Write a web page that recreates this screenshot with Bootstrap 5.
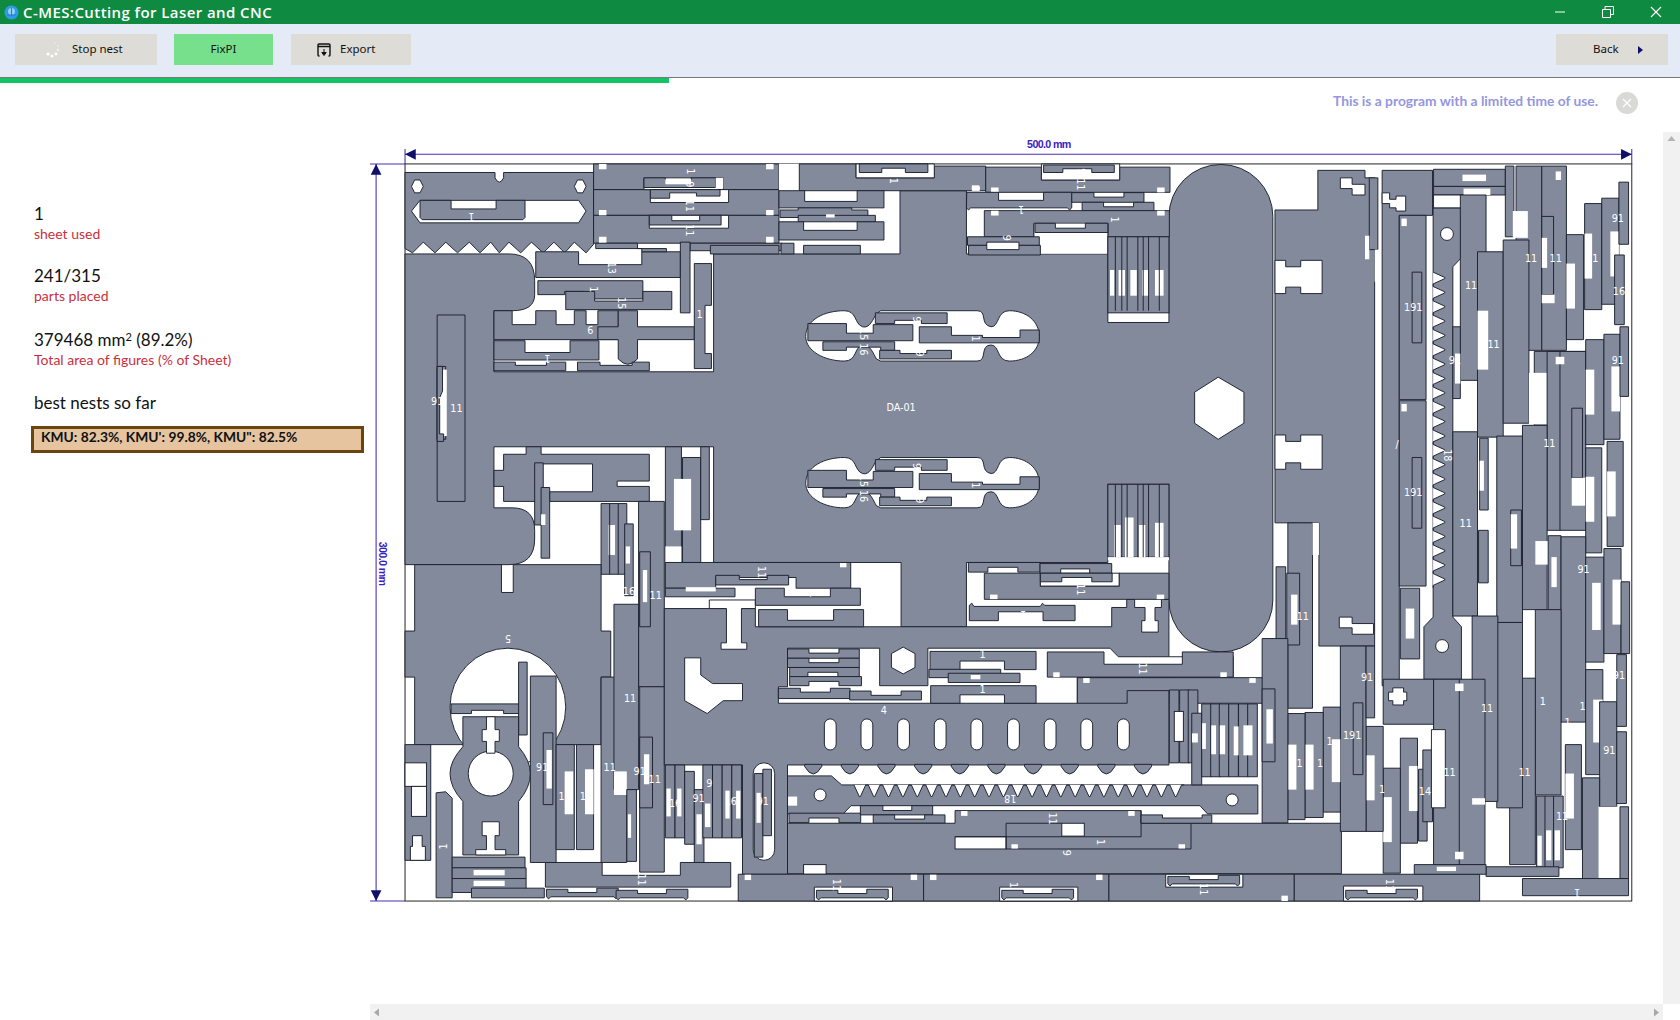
<!DOCTYPE html>
<html lang="en">
<head>
<meta charset="utf-8">
<title>C-MES:Cutting for Laser and CNC</title>
<link href="https://cdn.jsdelivr.net/npm/bootstrap@5.3.0/dist/css/bootstrap.min.css" rel="stylesheet">
<style>
html,body{height:100%;overflow:hidden;background:#fff}
.app-shell{height:1020px;width:1680px}
.title-strip{height:24px;background:#0f8a41;color:#fff;font:600 15px "Open Sans",sans-serif;letter-spacing:.42px}
.title-strip .win-btn{width:48px;height:24px}
.tool-strip{height:53px;background:#e4eaf6;padding:10px 12px 0 15px}
.tool-btn{height:31px;border:0;border-radius:0;background:#dedcd6;color:#111;font:11.5px "Noto Sans",sans-serif;padding:0 0 2px}
.tool-btn:hover{background:#dedcd6}
.tb-stop{width:142px;margin-right:17px;padding-left:29px}
.tb-stop svg{margin:2px 10px 0 0}
.tb-fix{width:99px;background:#77e08d;margin-right:18px}
.tb-fix:hover{background:#77e08d}
.tb-exp{width:120px;padding-left:26px}
.tb-exp svg{margin:2px 9px 0 0}
.tb-back{width:112px;padding-left:37px}
.tb-back svg{margin:2px 0 0 18px}
.run-bar{height:6px;border-radius:0;background:#fff;border-top:1px solid #777}
.run-bar .progress-bar{background:#12c464;margin-top:-1px;height:6px}
.notice-row{height:49px;padding:5px 42px 0 0}
.notice-txt{font:700 13.8px Lato,sans-serif;color:#9497e0;margin-right:18px;line-height:26px}
.notice-x{width:22px;height:22px;border-radius:50%;background:#d9d9d6;margin-top:4px}
.side-col{width:370px;padding:71px 0 0 34px;font-family:Lato,sans-serif}
.stat-val{font-size:17px;line-height:22px;color:#111}
.stat-val sup{font-size:11px}
.stat-cap{font-size:14px;line-height:18px;color:#c8303c;margin-bottom:22px}
.cap-mid{margin-bottom:24px}
.cap-far{margin-top:0;margin-bottom:23px}
.best-box{width:333px;height:27px;margin:12px 0 0 -3px;border:3px solid #6b4510;background:#e5c49f;font:700 13.8px/16px Lato,sans-serif;color:#111;padding:0 7px}
.stage-grid{display:grid;grid-template-columns:1293px 17px;grid-template-rows:872px 16px}
.sb-v,.sb-h{background:#f1f1f1}
.nest-svg{display:block}
.pt{fill:#838a9c;stroke:#1c2230;stroke-width:.9}
.wh{fill:#fff;stroke:#1c2230;stroke-width:.9}
.nw{fill:#fff;stroke:none}
.lb{fill:#fff;font:9px "DejaVu Sans",sans-serif;text-anchor:middle;stroke:none}
.dim{stroke:#4a2fb5;stroke-width:1;fill:none}
.dimt{fill:#3a22c0;font:700 10px "Liberation Sans",sans-serif;text-anchor:middle;letter-spacing:-.6px}
.ln{stroke:#1c2230;stroke-width:.9;fill:none}
</style>
</head>
<body>
<div class="app-shell d-flex flex-column">
  <div class="title-strip d-flex align-items-center">
    <svg class="ms-1 me-1" width="15" height="15" viewBox="0 0 15 15"><circle cx="7.500" cy="7.500" r="7" fill="#2f9be8"/><circle cx="7.500" cy="6.500" r="3.500" fill="#8fd0f5"/><path d="M3 10h9M7.500 3v8" stroke="#2a7fc4" fill="none"/></svg>
    <span class="flex-grow-1">C-MES:Cutting for Laser and CNC</span>
    <span class="win-btn d-flex align-items-center justify-content-center"><svg width="12" height="12"><path d="M1 6h10" stroke="#fff"/></svg></span>
    <span class="win-btn d-flex align-items-center justify-content-center"><svg width="12" height="12"><path d="M.5 3.500h8v8h-8zM3 3.500V.5h8.500v8H8.500" stroke="#fff" fill="none"/></svg></span>
    <span class="win-btn d-flex align-items-center justify-content-center"><svg width="12" height="12"><path d="M1 1l10 10M11 1L1 11" stroke="#fff" stroke-width="1.200"/></svg></span>
  </div>
  <div class="tool-strip d-flex">
    <button class="btn tool-btn tb-stop d-flex align-items-center"><svg width="18" height="18" viewBox="0 0 18 18"><g fill="#fff"><circle cx="14" cy="9" r="1.300" fill="#f1f0ec"/><circle cx="12" cy="13" r="1.400"/><circle cx="8" cy="15" r="1.500"/><circle cx="4" cy="13" r="1.600"/><circle cx="14" cy="5" r="1" fill="#eeece8"/><circle cx="11" cy="2" r=".9" fill="#e8e6e1"/></g></svg>Stop nest</button>
    <button class="btn tool-btn tb-fix">FixPI</button>
    <button class="btn tool-btn tb-exp d-flex align-items-center"><svg width="14" height="14" viewBox="0 0 14 14"><path d="M2.500 13H2a1 1 0 0 1-1-1V2a1 1 0 0 1 1-1h10a1 1 0 0 1 1 1v10a1 1 0 0 1-1 1h-.5M1 3.500h12" stroke="#111" stroke-width="1.400" fill="none"/><path d="M7 6v5M4.800 9.500L7 12.500l2.200-3z" stroke="#111" fill="#111"/></svg>Export</button>
    <span class="flex-grow-1"></span>
    <button class="btn tool-btn tb-back d-flex align-items-center"><span>Back</span><svg width="8" height="10" viewBox="0 0 8 10"><path d="M1 1l5 4-5 4z" fill="#10106a"/></svg></button>
  </div>
  <div class="progress run-bar"><div class="progress-bar" style="width:39.8%"></div></div>
  <div class="notice-row d-flex justify-content-end">
    <span class="notice-txt">This is a program with a limited time of use.</span>
    <span class="notice-x d-flex align-items-center justify-content-center"><svg width="10" height="10"><path d="M1 1l8 8M9 1L1 9" stroke="#fff" stroke-width="1.200"/></svg></span>
  </div>
  <div class="d-flex flex-grow-1">
    <div class="side-col">
      <div class="stat-val">1</div><div class="stat-cap">sheet used</div>
      <div class="stat-val">241/315</div><div class="stat-cap cap-mid">parts placed</div>
      <div class="stat-val">379468 mm<sup>2</sup> (89.2%)</div><div class="stat-cap cap-far">Total area of figures (% of Sheet)</div>
      <div class="stat-val">best nests so far</div>
      <div class="best-box">KMU: 82.3%, KMU': 99.8%, KMU": 82.5%</div>
    </div>
    <div class="stage-grid">
<svg class="nest-svg" width="1293" height="872" viewBox="345.33 123.2 1206.8 813.9">
<defs>
<path id="p9" d="M0,2H20V5H47V1H67V9l-2,2-2,-2H4l-2,2-2,-2Z"/>
<path id="sc" d="M-8,0v2q8,14 16,0v-2z"/>
<path id="vs" d="M0,0H9V68H0Z"/>
</defs>
<!-- dimensions -->
<path class="dim" d="M378,144H1523M378,139V153M1523,139V153M351,153V841M345,153H378M345,841H378"/>
<path d="M378,144l10,-5v10zM1523,144l-10,-5v10zM351,153l-5,10h10zM351,841l-5,-10h10z" fill="#10106a"/>
<text class="dimt" x="979" y="138">500.0 mm</text>
<text class="dimt" transform="translate(354,526) rotate(90)">300.0 mm</text>
<rect x="378" y="153" width="1145" height="688" fill="#fff" stroke="#333" stroke-width="1"/>

<!-- big part DA-01 -->
<path class="pt" d="M378,237H475Q499,237 499,262V275Q499,290 478,290H461V347H666V237H840V178H902V237H1034V301H1091V202A48,48 0 0 1 1188,202V560A48,48 0 0 1 1091,560V452H1034V525H902V585H841V525H666V417H461V474H478Q499,474 499,495V503Q499,527 475,527H378Z"/>
<path class="pt" d="M408,294H434V468H408Z"/>
<path class="pt" d="M408,342H416V410H408Z"/><rect class="nw" x="411" y="345" width="6" height="62"/>
<path class="pt" d="M408,342H413V365L410,372V405H414V412H408Z"/>
<path class="wh" d="M1137,352L1161,366V395L1137,410L1115,395V366Z"/>
<g id="slot"><path class="wh" d="M752,314C752,298 770,290 788,290C800,290 797,302 805,305C812,307 815,297 818,293L822,290H912C922,290 914,303 925,305C933,305 930,290 942,290C958,290 970,300 970,314C970,328 958,337 942,337C930,337 933,322 925,322C914,322 922,337 912,337H822L818,335C815,330 812,321 805,322C797,324 800,337 788,337C770,337 752,328 752,314Z"/>
<path class="pt" d="M754,302H790V311H815V303H852V318H754Z"/>
<path class="pt" d="M768,319H835V327H822V324H790V327H768Z"/>
<path class="pt" d="M817,292H884V302H860V299H835V302H817Z"/>
<path class="pt" d="M821,327H840V330H865V327H888V335H821Z"/>
<path class="pt" d="M858,305H888V313H917V315H952V308H970V320H858Z"/>
<text class="lb" transform="translate(803,312) rotate(90)">15</text><text class="lb" transform="translate(803,326) rotate(90)">16</text><text class="lb" transform="translate(907,316) rotate(90)">1</text><text class="lb" transform="translate(852,298) rotate(90)">9</text><text class="lb" transform="translate(855,330) rotate(90)">9</text></g>
<use href="#slot" transform="translate(0,137)"/>
<text class="lb" x="841" y="384">DA-01</text>
<text class="lb" transform="translate(1239,372) rotate(90)">3</text>

<!-- top-left part -->
<path class="pt" d="M378,161H462V166Q466,174 470,166V161H554V228L547,236L536,226L527,236L517,226L507,236L496,226L486,236L475,226L466,236L458,226L448,236L438,226L427,236L416,226L406,236L395,226L385,236L378,232Z"/>
<path class="wh" d="M384,174l3,-6 5,0 3,6-3,6-5,0z"/><path class="wh" d="M536,174l3,-6 5,0 3,6-3,6-5,0z"/>
<path class="wh" d="M384,197L392,187H540L547,197L540,208H392Z"/>
<path class="pt" d="M392,187H421V195H463V187H490V203L488,205H394L392,203Z"/>
<text class="lb" transform="translate(440,199) rotate(180)">1</text>

<!-- strips top -->
<path class="pt" d="M554,153H727V177H554Z"/><path class="pt" d="M554,177H727V201H554Z"/><path class="pt" d="M554,201H727V227H554Z"/>
<g class="nw"><rect x="559" y="153" width="7" height="5"/><rect x="715" y="153" width="7" height="5"/><rect x="559" y="196" width="7" height="5"/><rect x="715" y="196" width="7" height="5"/><rect x="559" y="221" width="7" height="6"/><rect x="715" y="221" width="7" height="6"/></g>
<path class="wh" d="M601,166H675V177H601Z"/><path class="pt" d="M601,166H621V168H645V166H668V175H601Z"/><rect class="nw" x="621" y="167" width="24" height="5"/><rect class="nw" x="668" y="166" width="7" height="10"/>
<path class="wh" d="M607,177H680V189H607Z"/><path class="pt" d="M607,177H672V183H650V180H625V185H607Z"/>
<path class="wh" d="M606,201H680V213H606Z"/><path class="pt" d="M606,201H627V206H653V201H673V210H606Z"/>
<rect class="nw" x="727" y="153" width="19" height="25"/>
<path class="pt" d="M746,153H799V166H872V155H920V178H746Z"/>
<path class="wh" d="M799,153H872V166H799Z"/>
<path class="pt" d="M802,153H866V161H845V157H823V161H802Z"/>
<rect class="nw" x="907" y="173" width="7" height="5"/>
<!-- p1 and 9s at 727-825 -->
<path class="pt" d="M727,178H751V188H800V178H825V194H727Z"/>
<path class="pt" d="M728,196H745V194H795V196H810V203H728Z"/>
<path class="pt" d="M745,201H817V207H745Z"/><rect class="nw" x="771" y="200" width="8" height="3"/>
<path class="pt" d="M727,207H750V215H800V207H825V224H727Z"/>
<path class="pt" d="M644,227H730V234H644Z"/>
<path class="pt" d="M663,229H727V237H663Z"/><path class="pt" d="M750,229H803V237H750Z"/><path class="pt" d="M729,227H741V237H729Z"/>
<!-- strips right of 902 -->
<path class="pt" d="M920,156H972V168H1045V156H1092V179.500H920Z"/>
<path class="wh" d="M972,153H1045V168H972Z"/>
<path class="pt" d="M974,154H1040V161H1019V157.500H992V161H974Z"/>
<rect class="nw" x="907.500" y="174" width="7" height="4"/><rect class="nw" x="925" y="175" width="7" height="4.500"/><rect class="nw" x="1080" y="175" width="7" height="4.500"/>
<path class="pt" d="M902.300,179.500H932V187H974V179.500H1000.300V194l-2,2-2,-2H906l-2,2-2,-2Z"/>
<path class="pt" d="M1000.300,179.800H1021V184H1049V179.800H1067.700V188.800H1000.300Z"/>
<path class="pt" d="M1010,188.800H1030V193H1058V188.800H1077V197H1010Z"/>
<path class="pt" d="M918.700,196.600H1091.400V221H1034V208.400H965V221H918.700Z"/>
<rect class="nw" x="925" y="196.700" width="7" height="4.500"/><rect class="nw" x="1080" y="196.700" width="7" height="4.500"/>
<rect class="nw" x="965" y="208.800" width="69" height="28"/>
<path class="ln" d="M965,208.400V221M1034,208.400V237"/>
<path class="pt" d="M966,208.400H985V213H1013V208.400H1034V217H966Z"/>
<path class="pt" d="M903,221H970V229H951V226H921V229H903Z"/>
<path class="pt" d="M904,229H921V233H951V229H971V238H904Z"/>
<rect class="pt" x="1034" y="221" width="57" height="71"/>
<g class="nw"><rect x="1036" y="252" width="4" height="24"/><rect x="1044" y="252" width="6" height="24"/><rect x="1055" y="252" width="6" height="24"/><rect x="1066" y="252" width="6" height="24"/><rect x="1078" y="252" width="8" height="24"/></g>
<path class="ln" d="M1041,221V290M1047,221V290M1052,221V290M1062,221V290M1067,221V290M1072,221V290M1082,221V290"/>
<rect class="pt" x="1034" y="452" width="57" height="68"/><rect class="nw" x="1034" y="520" width="57" height="3"/>
<g class="nw"><rect x="1040" y="490" width="6" height="30"/><rect x="1050" y="483" width="8" height="37"/><rect x="1063" y="490" width="6" height="30"/><rect x="1078" y="488" width="8" height="32"/></g>
<path class="ln" d="M1041,452V520M1047,452V520M1052,452V520M1062,452V520M1067,452V520M1072,452V520M1082,452V520"/>

<!-- upper hole content -->
<path class="pt" d="M500,235H540V247H599V235H635V259H500Z"/><path class="pt" d="M556,227H595V232H622V235H599V232H556Z"/>
<path class="pt" d="M502,262H600V279H545V272H527V275H502Z"/>
<path class="pt" d="M528,272H555V281H600V272H627V289H528Z"/>
<path class="pt" d="M461,290H478V303H500V290H519V303H536V290H547V303H558V290H577V317H461Z"/>
<path class="pt" d="M577,290H595V305H648V317H595V335Q586,345 577,335V317H558V305H577Z"/>
<path class="pt" d="M461,318H490V329H532V318H559V336H461Z"/>
<path class="pt" d="M461,338H481V341H510V338H528V346H461Z"/><path class="pt" d="M539,338H560V341H590V338H606V346H539Z"/>
<path class="pt" d="M635,226H644V292H635Z"/>
<path class="pt" d="M648,246H664V285H658V330H664V344H648Z"/>
<!-- lower hole content -->
<path class="pt" d="M491,417H505V424H606V449H576V454H606V468H513V459H553V433H506V468H470V454H461V439H470V424H491Z"/>
<path class="pt" d="M499,432H507V490H499Z"/><path class="pt" d="M505,455H513V521H505Z"/><rect class="nw" x="505" y="480" width="4" height="10"/>
<path class="pt" d="M621,417H636V525H621Z"/><path class="pt" d="M637,427H654V525H637Z"/><rect class="nw" x="629" y="447" width="16" height="48"/>
<path class="pt" d="M654,417H662V485H654Z"/>
<rect class="nw" x="621" y="510" width="15" height="15"/>
<path class="pt" d="M561,470H585V536H561Z"/><rect class="nw" x="568" y="490" width="6" height="28"/><path class="ln" d="M569,470V536M577,470V536"/>
<path class="pt" d="M583,489H591V556H583Z"/><rect class="nw" x="584" y="510" width="4" height="16"/>
<path class="pt" d="M596,468H620V641H596Z"/><path class="pt" d="M597,515H607V585H597Z"/><rect class="nw" x="600" y="532" width="4" height="30"/>

<!-- part 5 -->
<path class="pt" d="M387,527H468V553H479V527H561V589H570V632H561V695H387V632H378V589H387Z"/>
<ellipse class="wh" cx="474" cy="660" rx="54" ry="55"/>
<text class="lb" transform="translate(474,593) rotate(180)">5</text>
<path class="pt" d="M421,657H488V666H470V663H440V666H421Z"/>
<path class="pt" d="M484,618H492V686H484Z"/>
<!-- dumbbell -->
<path class="pt" d="M432,669H484V697Q495,710 495,722Q495,735 484,748V798H432V748Q420,735 420,722Q420,710 432,697Z"/>
<ellipse class="wh" cx="458" cy="722" rx="21" ry="21"/>
<path class="wh" d="M454,669H462V681H466V692H462V703H454V692H450V681H454Z"/>
<path class="wh" d="M450,767H466V780H462V793H472V798H444V793H454V780H450Z"/>
<path class="pt" d="M378,695H402V803H378Z"/>
<rect class="wh" x="378" y="712" width="20" height="22"/><rect class="wh" x="384" y="734" width="14" height="28"/>
<path class="wh" d="M385,780H394V790H397V803H383V790H385Z"/>
<path class="pt" d="M407,740L416,739L422,745V838H407Z"/><text class="lb" transform="translate(417,790) rotate(-90)">1</text>
<path class="pt" d="M422,800H490V810H422Z"/><path class="pt" d="M422,810H491V820H422Z"/><rect class="nw" x="442" y="812" width="29" height="5"/>
<path class="pt" d="M422,820H491V833H422Z"/><rect class="nw" x="442" y="822" width="29" height="5"/>
<path class="pt" d="M440,829H508V838H440Z"/>
<path class="pt" d="M509,805H562V817H635V805H682V828H509Z"/>
<use class="pt" href="#p9" transform="translate(510,828)"/><use class="pt" href="#p9" transform="translate(575,829)"/>
<path class="pt" d="M495,631H519V805H495Z"/>
<path class="pt" d="M507,684H516V751H507Z"/><rect class="nw" x="510" y="700" width="5" height="36"/>
<path class="pt" d="M519,695H536V793H519Z"/><rect class="nw" x="527" y="720" width="8" height="40"/>
<path class="pt" d="M538,695H554V793H538Z"/><rect class="nw" x="546" y="718" width="8" height="42"/>
<path class="pt" d="M561,632H585V805H561Z"/><path class="pt" d="M573,564H596V737H573Z"/><rect class="nw" x="573" y="720" width="12" height="22"/>
<path class="pt" d="M597,641H620V814H597Z"/><path class="pt" d="M597,688H609V754H597Z"/><rect class="nw" x="601" y="704" width="5" height="28"/>
<path class="pt" d="M585,737H594V804H585Z"/><rect class="nw" x="586" y="760" width="3" height="22"/>

<!-- piece 4 -->
<path class="pt" d="M620,568H705V585H1037.600V567H1051.600V559.400H1059V567H1068.700V579.300H1065.600V590H1081V579.300H1078V567H1084V559.400H1091V714H735V816H693V714H620Z"/>
<path class="wh" d="M662,560H705V568H692V600H697V606H673V600H678V568H662Z"/>
<path class="wh" d="M639,614H654V630L665,638H693V654H675L660,666L639,654Z"/>
<path class="wh" d="M735,605H821V640H866V605H1036L1043.800,613H1151V632H1005.500V656.400H726.500V641H735Z"/>
<path class="wh" d="M843,604L854,610V623L843,629L832,623V610Z"/>
<path class="pt" d="M735,605.700H755V609.600H783V605.700H802V614.400H735Z"/>
<path class="pt" d="M735,614.400H755V618.500H783V614.400H802V623H735Z"/>
<path class="pt" d="M737,623H802V631.500H782V627.500H754V631.500H737Z"/>
<path class="pt" d="M737,631.500H804V640H783V636H755V640H737Z"/>
<path class="pt" d="M726.500,642.400H747V646H775V642.400H793.400V652H726.500Z"/>
<path class="pt" d="M793,645H813V649H841V645H860V653.300H793Z"/>
<path class="pt" d="M868,608H967V625H937.500V617H896V625H868Z"/>
<path class="pt" d="M867,624.700H934V632.500H867Z"/>
<path class="pt" d="M885,628.400H952V637H885Z"/><rect class="nw" x="906" y="630" width="9" height="4"/>
<path class="pt" d="M868.600,640H967V656.400H937.500V648.500H896V656.400H868.600Z"/>
<path class="pt" d="M977.500,608.500H1030.400V620H1103.500V608.500H1151V632H977.500Z"/>
<rect class="nw" x="983" y="627.500" width="6" height="4.500"/><rect class="nw" x="1139" y="627.500" width="6" height="4.500"/>
<path class="pt" d="M1005.500,632.500H1178.500V656.400H1092V644.600H1052V656.400H1005.500Z"/>
<rect class="nw" x="1011" y="632.900" width="6" height="4.500"/><rect class="nw" x="1166" y="632.900" width="6" height="4.500"/>
<g fill="#fff" stroke="#1c2230" stroke-width=".9"><rect x="769.400" y="671" width="11" height="29" rx="5.500"/><rect x="803.600" y="671" width="11" height="29" rx="5.500"/><rect x="837.800" y="671" width="11" height="29" rx="5.500"/><rect x="872" y="671" width="11" height="29" rx="5.500"/><rect x="906.200" y="671" width="11" height="29" rx="5.500"/><rect x="940.400" y="671" width="11" height="29" rx="5.500"/><rect x="974.600" y="671" width="11" height="29" rx="5.500"/><rect x="1008.800" y="671" width="11" height="29" rx="5.500"/><rect x="1043" y="671" width="11" height="29" rx="5.500"/></g>
<rect class="wh" x="703" y="712" width="20" height="91" rx="10"/>
<path class="pt" d="M704,722H712V800H704Z"/><rect class="nw" x="706" y="740" width="4" height="28"/><path class="pt" d="M712,718H720V780H712Z"/>
<text class="lb" x="825" y="666">4</text>
<!-- scallops / rack -->
<use class="pt" href="#sc" transform="translate(759,713.400)"/><use class="pt" href="#sc" transform="translate(793.200,713.400)"/><use class="pt" href="#sc" transform="translate(827.400,713.400)"/><use class="pt" href="#sc" transform="translate(861.600,713.400)"/><use class="pt" href="#sc" transform="translate(895.800,713.400)"/><use class="pt" href="#sc" transform="translate(930,713.400)"/><use class="pt" href="#sc" transform="translate(964.200,713.400)"/><use class="pt" href="#sc" transform="translate(998.400,713.400)"/><use class="pt" href="#sc" transform="translate(1032.600,713.400)"/><use class="pt" href="#sc" transform="translate(1066.800,713.400)"/>
<path class="pt" d="M735,724.200H776L785.600,732.600H1174V759.700H1127L1120,752H794.300L787,759.700H735Z"/>
<path class="wh" d="M797,732.600l5,10.900h1l5,-10.900h2.400l5,10.900h1l5,-10.900h2.400l5,10.900h1l5,-10.900h2.400l5,10.900h1l5,-10.900h2.400l5,10.900h1l5,-10.900h2.400l5,10.900h1l5,-10.900h2.400l5,10.900h1l5,-10.900h2.400l5,10.900h1l5,-10.900h2.400l5,10.900h1l5,-10.900h2.400l5,10.900h1l5,-10.900h2.400l5,10.900h1l5,-10.900h2.400l5,10.900h1l5,-10.900h2.400l5,10.900h1l5,-10.900h2.400l5,10.900h1l5,-10.900h2.400l5,10.900h1l5,-10.900h2.400l5,10.900h1l5,-10.900h2.400l5,10.900h1l5,-10.900h2.400l5,10.900h1l5,-10.900h2.400l5,10.900h1l5,-10.900h2.400l5,10.900h1l5,-10.900h2.400l5,10.900h1l5,-10.900h2.400l5,10.900h1l5,-10.900h2.400l5,10.900h1l5,-10.900h2.400"/>
<rect class="nw" x="735.500" y="743.500" width="8.500" height="8.500"/>
<circle class="wh" cx="765.400" cy="742" r="5.600"/><circle class="wh" cx="1150" cy="746.600" r="5.600"/>
<path class="pt" d="M736.400,759H803.300V767.800H783V763.500H755V767.800H736.400Z"/>
<path class="pt" d="M803,752H824V756.500H851V752H870.500V760.600H803Z"/>
<path class="pt" d="M815,760.600H835V764.500H863V760.600H882V768.400H815Z"/>
<path class="pt" d="M735,768.400H891.400V756.600H1065V768.400H1252V815.500H735Z"/>
<rect class="wh" x="750" y="807" width="21" height="9"/>
<rect class="wh" x="891.400" y="781" width="47.600" height="11.400"/>
<path class="ln" d="M891.400,781H1065V756.600M939,792.400H1111.600V768.400"/>
<path class="ln" d="M939,768.400V792.400M939,768.400H991"/>
<rect class="wh" x="991" y="768.400" width="21" height="12"/>
<g class="nw"><rect x="897" y="757" width="6" height="4.500"/><rect x="1053" y="757" width="6" height="4.500"/><rect x="944" y="788" width="6" height="4"/><rect x="1100" y="788" width="6" height="4"/></g>
<path class="pt" d="M1065,760.600H1085V763.500H1122V760.600H1131V768.400H1065Z"/>
<text class="lb" transform="translate(992,796) rotate(90)">9</text>
<path class="pt" d="M689,816H862V841H689Z"/><path class="pt" d="M862,816H1035V841H862Z"/><path class="pt" d="M1035,816H1208V841H1035Z"/><path class="pt" d="M1208,816H1381V841H1208Z"/>
<path class="wh" d="M760,828H833V841H760Z"/><path class="wh" d="M933,828H1006V841H933Z"/><path class="wh" d="M1088,816H1160V828H1088Z"/><path class="wh" d="M1254,827H1328V841H1254Z"/>
<use class="pt" href="#p9" transform="translate(762,829)"/><use class="pt" href="#p9" transform="translate(935,829)"/><use class="pt" href="#p9" transform="translate(1090,816)"/><use class="pt" href="#p9" transform="translate(1256,829)"/>
<g class="nw"><rect x="695" y="816.400" width="6" height="5"/><rect x="850" y="816.400" width="6" height="5"/><rect x="868" y="816.400" width="6" height="5"/><rect x="1023" y="816.400" width="6" height="5"/><rect x="1196" y="836" width="6" height="5"/></g>
<!-- small-part blocks -->
<g><use class="pt" href="#vs" transform="translate(621,714)"/><use class="pt" href="#vs" transform="translate(630,714)"/><use class="pt" href="#vs" transform="translate(639,720)"/><use class="pt" href="#vs" transform="translate(648,737)"/><use class="pt" href="#vs" transform="translate(656,714)"/><use class="pt" href="#vs" transform="translate(665,714)"/><use class="pt" href="#vs" transform="translate(674,714)"/><use class="pt" href="#vs" transform="translate(683,714)"/></g>
<g class="nw"><rect x="622" y="736" width="4" height="26"/><rect x="632" y="736" width="4" height="26"/><rect x="650" y="760" width="5" height="28"/><rect x="677" y="738" width="4" height="26"/><rect x="687" y="738" width="4" height="26"/><rect x="658" y="750" width="5" height="22"/></g>
<use class="pt" href="#vs" transform="translate(1091.400,644)"/><use class="pt" href="#vs" transform="translate(1101,644)"/><use class="pt" href="#vs" transform="translate(1109,644)"/>
<rect class="wh" x="1096" y="664" width="8.500" height="28"/>
<path class="pt" d="M1112.300,665.700H1121.600V732.600H1112.300Z"/><rect class="nw" x="1112.500" y="684.500" width="5.500" height="8.500"/>
<use class="pt" href="#vs" transform="translate(1121.600,657)"/><use class="pt" href="#vs" transform="translate(1130,657)"/><use class="pt" href="#vs" transform="translate(1138,657)"/><use class="pt" href="#vs" transform="translate(1146.800,657)"/><use class="pt" href="#vs" transform="translate(1156,657)"/><use class="pt" href="#vs" transform="translate(1164.500,657)"/>
<g class="nw"><rect x="1122" y="675" width="3.500" height="24"/><rect x="1130.500" y="677" width="4.500" height="27"/><rect x="1138.500" y="677" width="5" height="27"/><rect x="1151.500" y="678" width="4.500" height="27"/><rect x="1160.500" y="677" width="8.500" height="28"/></g>
<!-- mid strips under DA-01 -->
<path class="pt" d="M621,525H794V549H743V539H668V549H621Z"/><rect class="nw" x="784" y="525.500" width="6" height="4"/>
<path class="pt" d="M668,537H690V541H716V537H736V546H668Z"/>
<path class="pt" d="M621,549H686V557H621Z"/><rect class="nw" x="640" y="548" width="28" height="4"/>
<path class="pt" d="M705,549H732V557H775V549H803V565H705Z"/><path class="pt" d="M708,569H735V579H778V569H806V585H708Z"/>
<!-- 902-1091 below DA-01 -->
<path class="pt" d="M903.800,525H970.700V534H950V529.500H922V534H903.800Z"/>
<path class="pt" d="M918.700,535H971V547H1044.500V535H1091V559.400H918.700Z"/>
<rect class="nw" x="924" y="555" width="7" height="4.200"/><rect class="nw" x="1079.600" y="555" width="7" height="4.200"/>
<rect class="wh" x="971" y="535" width="73.500" height="12"/>
<path class="pt" d="M970.700,526H1037.600V535H1017V531H990V535H970.700Z"/>
<path class="pt" d="M971,535H1038V543H1019V539H991V543H971Z"/>
<path class="pt" d="M904.700,565L907,563L909,566H971L973,563L975,565H1003.400V579.300H973.500V571H931.800V579.300H904.700Z"/>

<!-- part 3 & right column -->
<path class="pt" d="M1190,196H1230V159H1274V166H1283V603H1231V488H1190Z"/>
<path class="wh" d="M1251,166H1262V172H1274V182H1262V176H1251Z"/>
<path class="wh" d="M1190,243H1200V249H1214V243H1234V274H1214V268H1200V274H1190Z"/>
<path class="wh" d="M1190,406H1200V412H1214V406H1234V438H1214V432H1200V438H1190Z"/>
<path class="wh" d="M1250,576H1262V582H1282V592H1262V586H1250Z"/>
<path class="pt" d="M1278,166H1286V233H1278Z"/><rect class="nw" x="1274" y="220" width="4" height="22"/><rect class="nw" x="1283" y="233" width="7" height="30"/>
<path class="pt" d="M1202,488H1225V661H1202Z"/><rect class="nw" x="1225" y="488" width="6" height="30"/>
<path class="pt" d="M1191,529H1200V596H1191Z"/><path class="pt" d="M1201,535H1213V602H1201Z"/><rect class="nw" x="1205" y="555" width="6" height="28"/>
<path class="pt" d="M1290,159H1337V201H1306V640H1290Z"/>
<path class="wh" d="M1290,180H1297V186H1303V183H1312V197H1303V194H1297V190H1290Z"/>
<path class="pt" d="M1306,201H1331V373H1306Z"/><rect class="nw" x="1308" y="204" width="5" height="7"/><path class="pt" d="M1306,374H1331V547H1306Z"/><rect class="nw" x="1308" y="377" width="5" height="7"/>
<path class="pt" d="M1318,254H1327V320H1318Z"/><path class="pt" d="M1318,427H1327V493H1318Z"/>
<path class="pt" d="M1337.600,194H1363.500V241L1356,249V576L1364,585V634H1329V585L1337.600,576Z"/>
<circle class="wh" cx="1350.500" cy="218.400" r="6"/><circle class="wh" cx="1346" cy="603" r="6"/>
<path class="wh" d="M1337.600,254l10.900,5v1l-10.900,5v2.400l10.900,5v1l-10.900,5v2.400l10.900,5v1l-10.900,5v2.400l10.900,5v1l-10.900,5v2.400l10.900,5v1l-10.900,5v2.400l10.900,5v1l-10.900,5v2.400l10.900,5v1l-10.900,5v2.400l10.900,5v1l-10.900,5v2.400l10.900,5v1l-10.900,5v2.400l10.900,5v1l-10.900,5v2.400l10.900,5v1l-10.900,5v2.400l10.900,5v1l-10.900,5v2.400l10.900,5v1l-10.900,5v2.400l10.900,5v1l-10.900,5v2.400l10.900,5v1l-10.900,5v2.400l10.900,5v1l-10.900,5v2.400l10.900,5v1l-10.900,5v2.400l10.900,5v1l-10.900,5v2.400l10.900,5v1l-10.900,5v2.400l10.900,5v1l-10.900,5v2.400l10.900,5v1l-10.900,5v2.400l10.900,5v1l-10.900,5v2.400"/>
<path class="pt" d="M1307,549H1325V615H1307Z"/><rect class="nw" x="1312" y="568" width="8" height="28"/>
<path class="pt" d="M1338,158H1405V174H1338Z"/><rect class="nw" x="1365" y="163" width="22" height="6"/><path class="pt" d="M1338,174H1405V182H1338Z"/><rect class="wh" x="1338" y="182" width="29" height="12"/><rect class="nw" x="1366" y="176" width="25" height="6"/>
<path class="pt" d="M1363,182H1387V355H1363Z"/>
<path class="pt" d="M1356,305H1363V372H1356Z"/><rect class="nw" x="1358" y="330" width="5" height="28"/>
<path class="pt" d="M1379,235H1403V408H1379Z"/><rect class="nw" x="1379" y="290" width="10" height="55"/>
<path class="pt" d="M1405,155H1413V221H1405Z"/>
<path class="pt" d="M1415,155H1439V327H1415Z"/><rect class="nw" x="1412" y="197" width="14" height="25"/>
<path class="pt" d="M1439,155H1462V327H1439Z"/><rect class="nw" x="1452" y="160" width="5" height="8"/>
<path class="pt" d="M1439,202H1450V275H1439Z"/><rect class="nw" x="1439" y="222" width="5" height="28"/><rect class="nw" x="1439" y="275" width="12" height="8"/>
<path class="pt" d="M1403,224H1427V395H1403Z"/>
<path class="pt" d="M1462,219H1478V317H1462Z"/><rect class="nw" x="1462" y="246" width="8" height="42"/>
<path class="pt" d="M1479,190H1495V289H1479Z"/><rect class="nw" x="1479" y="218" width="7" height="42"/>
<path class="pt" d="M1495,185H1511V284H1495Z"/><rect class="nw" x="1503" y="216" width="8" height="42"/>
<path class="pt" d="M1511,170H1520V228H1511Z"/><path class="pt" d="M1507,238H1516V303H1507Z"/>
<path class="pt" d="M1432,328H1480V397H1432Z"/>
<rect class="nw" x="1427" y="348" width="17" height="48"/>
<path class="pt" d="M1444,328H1480V495H1444Z"/><path class="ln" d="M1456,328V495"/>
<rect class="nw" x="1452" y="333" width="8" height="7"/><path class="pt" d="M1467,381H1477V446H1467Z"/><rect class="nw" x="1467" y="446" width="13" height="26"/>
<path class="pt" d="M1480,317H1497V415H1480Z"/><rect class="nw" x="1480" y="345" width="8" height="42"/>
<path class="pt" d="M1497,312H1512V410H1497Z"/><rect class="nw" x="1504" y="342" width="8" height="42"/>
<path class="pt" d="M1512,305H1520V370H1512Z"/>
<path class="pt" d="M1480,418H1495V516H1480Z"/><rect class="nw" x="1480" y="445" width="8" height="42"/>
<path class="pt" d="M1500,412H1515V510H1500Z"/><rect class="nw" x="1500" y="440" width="8" height="42"/>
<path class="pt" d="M1356,403H1379V575H1356Z"/>
<path class="pt" d="M1381,409H1389V476H1381Z"/><rect class="nw" x="1381" y="430" width="4" height="28"/>
<path class="pt" d="M1397,407H1421V581H1397Z"/><path class="pt" d="M1410,476H1420V528H1410Z"/>
<rect class="nw" x="1410" y="480" width="6" height="32"/>
<path class="pt" d="M1421,397H1444V569H1421Z"/><rect class="nw" x="1433" y="505" width="12" height="22"/>
<path class="pt" d="M1445,500H1457V569H1445Z"/><rect class="nw" x="1448" y="520" width="5" height="28"/>
<path class="pt" d="M1380,495H1389V544H1380Z"/>
<path class="pt" d="M1457,501H1480V674H1457Z"/>
<path class="pt" d="M1480,520H1497V618H1480Z"/><rect class="nw" x="1486" y="544" width="8" height="44"/>
<path class="pt" d="M1497,512H1513V610H1497Z"/><rect class="nw" x="1505" y="541" width="8" height="42"/>
<path class="pt" d="M1513,543H1521V610H1513Z"/>
<path class="pt" d="M1480,625H1496V723H1480Z"/><rect class="nw" x="1487" y="653" width="9" height="40"/>
<path class="pt" d="M1493,655H1509V753H1493Z"/>
<path class="pt" d="M1509,611H1518V678H1509Z"/><path class="pt" d="M1509,683H1518V750H1509Z"/>
<path class="pt" d="M1445,622H1455V689H1445Z"/><rect class="nw" x="1448" y="640" width="5" height="30"/>
<path class="pt" d="M1461,695H1476V793H1461Z"/><rect class="nw" x="1461" y="722" width="8" height="42"/>
<path class="pt" d="M1477,726H1493V824H1477Z"/>
<rect class="nw" x="1492" y="753" width="20" height="67"/>
<path class="pt" d="M1512,753H1520V820H1512Z"/>
<path class="pt" d="M1421,820H1520V836H1421Z"/>
<path class="pt" d="M1433,569H1457V742H1433Z"/>
<path class="pt" d="M1434,743H1459V810H1434Z"/><g class="nw"><rect x="1435" y="780" width="4" height="28"/><rect x="1443" y="775" width="5" height="28"/><rect x="1451" y="775" width="5" height="28"/></g><path class="ln" d="M1442,743V810M1450,743V810"/>
<path class="pt" d="M1409,633H1433V807H1409Z"/><rect class="nw" x="1409" y="681" width="12" height="26"/>
<path class="pt" d="M1397,581H1421V754H1397Z"/>
<path class="pt" d="M1374,575H1398V748H1374Z"/>
<path class="pt" d="M1338,634H1386V807H1338Z"/><path class="ln" d="M1362,634V807"/><rect class="nw" x="1358" y="638" width="8" height="7"/><rect class="nw" x="1358" y="795" width="8" height="7"/><rect class="nw" x="1374" y="745" width="12" height="6"/>
<path class="pt" d="M1387,809H1455V818H1387Z"/><path class="pt" d="M1320,807H1387V816H1320Z"/><rect class="nw" x="1341" y="809" width="18" height="4"/>
<path class="pt" d="M1291,634H1338V676H1291Z"/><path class="wh" d="M1300,642H1310V646H1313V654H1310V658H1300V654H1296V646H1300Z"/>
<path class="pt" d="M1307,689H1323V787H1307Z"/><rect class="nw" x="1315" y="715" width="8" height="42"/>
<path class="pt" d="M1291,717H1307V815H1291Z"/><rect class="nw" x="1291" y="744" width="8" height="42"/>
<path class="pt" d="M1275,678H1291V776H1275Z"/><rect class="nw" x="1275" y="705" width="8" height="42"/>
<path class="pt" d="M1251,603H1275V776H1251Z"/>
<path class="pt" d="M1235,660H1251V758H1235Z"/><rect class="nw" x="1243" y="690" width="8" height="40"/>
<path class="pt" d="M1218,665H1235V763H1218Z"/><rect class="nw" x="1218" y="695" width="8" height="42"/>
<path class="pt" d="M1202,666H1218V765H1202Z"/><rect class="nw" x="1202" y="695" width="8" height="42"/>
<path class="pt" d="M1178,596H1202V768H1178Z"/>
<path class="pt" d="M1178,643H1190V711H1178Z"/><rect class="nw" x="1182" y="662" width="6" height="32"/>
<path class="pt" d="M1263,656H1272V723H1263Z"/><path class="pt" d="M1275,603H1283V670H1275Z"/>
<path class="pt" d="M1324,718H1332V785H1324Z"/><path class="pt" d="M1328,700H1337V767H1328Z"/><path class="wh" d="M1336,681H1349V754H1336Z"/>

<!-- labels -->
<g>
<text class="lb" x="426" y="385">11</text><text class="lb" x="408" y="378">91</text>
<text class="lb" transform="translate(641,160) rotate(90)">1</text><text class="lb" transform="translate(640,172) rotate(90)">9</text><text class="lb" transform="translate(640,215) rotate(90)">11</text><text class="lb" transform="translate(640,192) rotate(90)">11</text>
<text class="lb" transform="translate(831,166) rotate(90)">11</text><text class="lb" transform="translate(1005,172) rotate(90)">11</text><text class="lb" transform="translate(1006,160) rotate(90)">9</text>
<text class="lb" transform="translate(953,192) rotate(180)">1</text><text class="lb" transform="translate(1037,205) rotate(90)">1</text><text class="lb" transform="translate(936,222) rotate(90)">9</text>
<text class="lb" transform="translate(567,250) rotate(90)">13</text><text class="lb" transform="translate(551,270) rotate(90)">1</text><text class="lb" transform="translate(577,283) rotate(90)">15</text><text class="lb" x="551" y="312">6</text><text class="lb" transform="translate(511,331) rotate(180)">1</text><text class="lb" x="653" y="297">1</text>
<text class="lb" x="612" y="559">11</text><text class="lb" x="587" y="555">16</text><text class="lb" x="611" y="731">11</text><text class="lb" x="588" y="655">11</text>
<text class="lb" x="527" y="747">11</text><text class="lb" x="544" y="747">1</text><text class="lb" x="506" y="720">91</text><text class="lb" x="569" y="720">11</text><text class="lb" x="597" y="723">91</text>
<text class="lb" x="630" y="753">16</text><text class="lb" x="652" y="749">91</text><text class="lb" x="682" y="751">16</text><text class="lb" x="662" y="735">9</text><text class="lb" x="712" y="751">91</text>
<text class="lb" transform="translate(595,821) rotate(90)">11</text><text class="lb" transform="translate(777,826) rotate(90)">11</text><text class="lb" transform="translate(943,826) rotate(90)">1</text><text class="lb" transform="translate(1120,830) rotate(90)">11</text><text class="lb" transform="translate(1294,826) rotate(90)">11</text>
<text class="lb" transform="translate(979,764) rotate(90)">11</text><text class="lb" transform="translate(1024,786) rotate(90)">1</text><text class="lb" transform="translate(943,742) rotate(180)">18</text>
<text class="lb" x="917" y="614">1</text><text class="lb" x="917" y="647">1</text><text class="lb" transform="translate(1063,624) rotate(90)">11</text><text class="lb" transform="translate(955,570) rotate(180)">1</text><text class="lb" transform="translate(1005,550) rotate(90)">11</text><text class="lb" transform="translate(756,555) rotate(90)">1</text><text class="lb" transform="translate(757,575) rotate(90)">1</text><text class="lb" transform="translate(707,534) rotate(90)">11</text>
<text class="lb" x="1216" y="579">11</text><text class="lb" x="1304" y="418">/</text>
<text class="lb" transform="translate(1348,425) rotate(90)">18</text>
<text class="lb" x="1429" y="245">11</text><text class="lb" x="1452" y="245">11</text><text class="lb" x="1394" y="325">11</text><text class="lb" x="1446" y="417">11</text><text class="lb" x="1423" y="724">11</text><text class="lb" x="1388" y="665">11</text><text class="lb" x="1353" y="724">11</text><text class="lb" x="1368" y="492">11</text>
<text class="lb" x="1319" y="290">191</text><text class="lb" x="1319" y="463">191</text><text class="lb" x="1373" y="270">11</text><text class="lb" x="1358" y="340">91</text>
<text class="lb" x="1510" y="207">91</text><text class="lb" x="1510" y="340">91</text><text class="lb" x="1511" y="275">16</text><text class="lb" x="1489" y="245">1</text><text class="lb" x="1440" y="658">1</text><text class="lb" x="1463" y="678">1</text>
<text class="lb" x="1290" y="740">1</text><text class="lb" x="1262" y="690">191</text><text class="lb" x="1232" y="716">1</text><text class="lb" x="1213" y="716">1</text><text class="lb" x="1241" y="695">1</text><text class="lb" x="1276" y="636">91</text><text class="lb" x="1330" y="742">14</text>
<text class="lb" x="1478" y="535">91</text><text class="lb" x="1511" y="634">91</text><text class="lb" x="1502" y="704">91</text><text class="lb" x="1477" y="663">1</text><text class="lb" x="1458" y="765">11</text>
<text class="lb" transform="translate(1472,830) rotate(180)">1</text>
</g>
</svg>
      <div class="sb-v d-flex justify-content-center pt-1"><svg width="9" height="6"><path d="M4.500 0l4 5h-8z" fill="#b5b5b5"/></svg></div>
      <div class="sb-h d-flex justify-content-between align-items-center px-1"><svg width="6" height="9"><path d="M0 4.500l5-4v8z" fill="#a8a8a8"/></svg><svg width="6" height="9"><path d="M6 4.500l-5-4v8z" fill="#a8a8a8"/></svg></div>
      <div></div>
    </div>
  </div>
</div>
</body>
</html>
